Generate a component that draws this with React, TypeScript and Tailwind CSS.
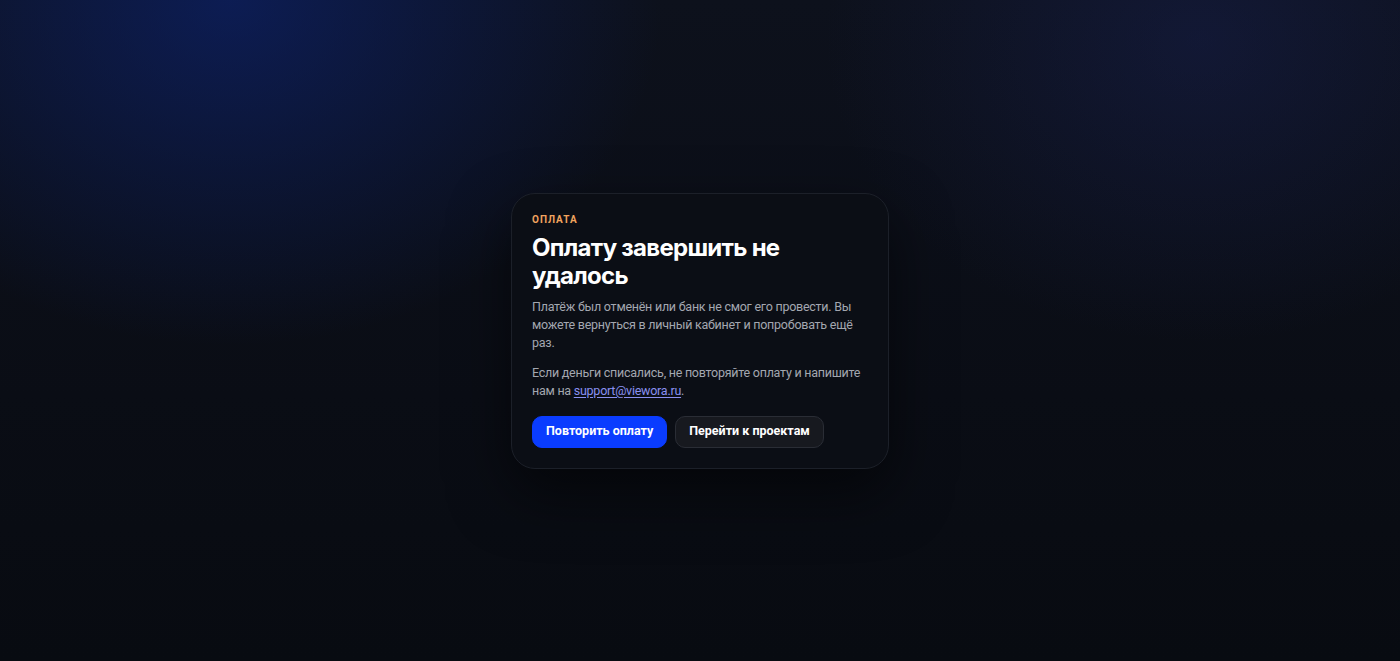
export default function App() {
  return (
    <div
      className="relative flex min-h-[661px] w-full items-center justify-center overflow-hidden bg-[linear-gradient(180deg,#0d111c_0%,#0a0d15_60%,#080b11_100%)]"
      style={{ fontFamily: "Roboto, 'Noto Sans', sans-serif" }}
    >
      {/* background glows */}
      <div className="pointer-events-none absolute inset-0 bg-[radial-gradient(ellipse_600px_480px_at_230px_0px,rgba(12,36,120,0.6),transparent_72%)]" />
      <div className="pointer-events-none absolute inset-0 bg-[radial-gradient(ellipse_520px_420px_at_1200px_40px,rgba(28,38,100,0.35),transparent_72%)]" />

      <div className="relative w-[378px] rounded-[24px] border border-[#1c2029] bg-[#0b0e15] p-5 shadow-[0_24px_60px_rgba(0,0,0,0.55)]">
        <div className="text-[10px] font-bold uppercase leading-3 tracking-[0.1em] text-[#f0a35e]">
          Оплата
        </div>
        <h1 className="mt-2 font-['Inter'] text-[24px] font-bold leading-[28px] tracking-[-0.03em] text-white">
          Оплату завершить не удалось
        </h1>
        <p className="mt-2 text-[12.5px] leading-[18px] tracking-[-0.02em] text-[#a3a7b0]">
          Платёж был отменён или банк не смог его провести. Вы можете вернуться в личный кабинет и
          попробовать ещё раз.
        </p>
        <p className="mt-3 text-[12.5px] leading-[18px] tracking-[-0.02em] text-[#a3a7b0]">
          Если деньги списались, не повторяйте оплату и напишите нам на{" "}
          <a href="#" className="text-[#8a90f0] underline underline-offset-2">
            support@viewora.ru
          </a>
          .
        </p>
        <div className="mt-4 flex gap-2">
          <button className="h-8 rounded-[10px] border border-[#0a3cff] bg-[#0a3cff] px-[13px] text-[12.5px] font-bold text-white">
            Повторить оплату
          </button>
          <button className="h-8 rounded-[10px] border border-[#2a2d35] bg-[#17191f] px-[13px] text-[12.5px] font-bold text-white">
            Перейти к проектам
          </button>
        </div>
      </div>
    </div>
  );
}
